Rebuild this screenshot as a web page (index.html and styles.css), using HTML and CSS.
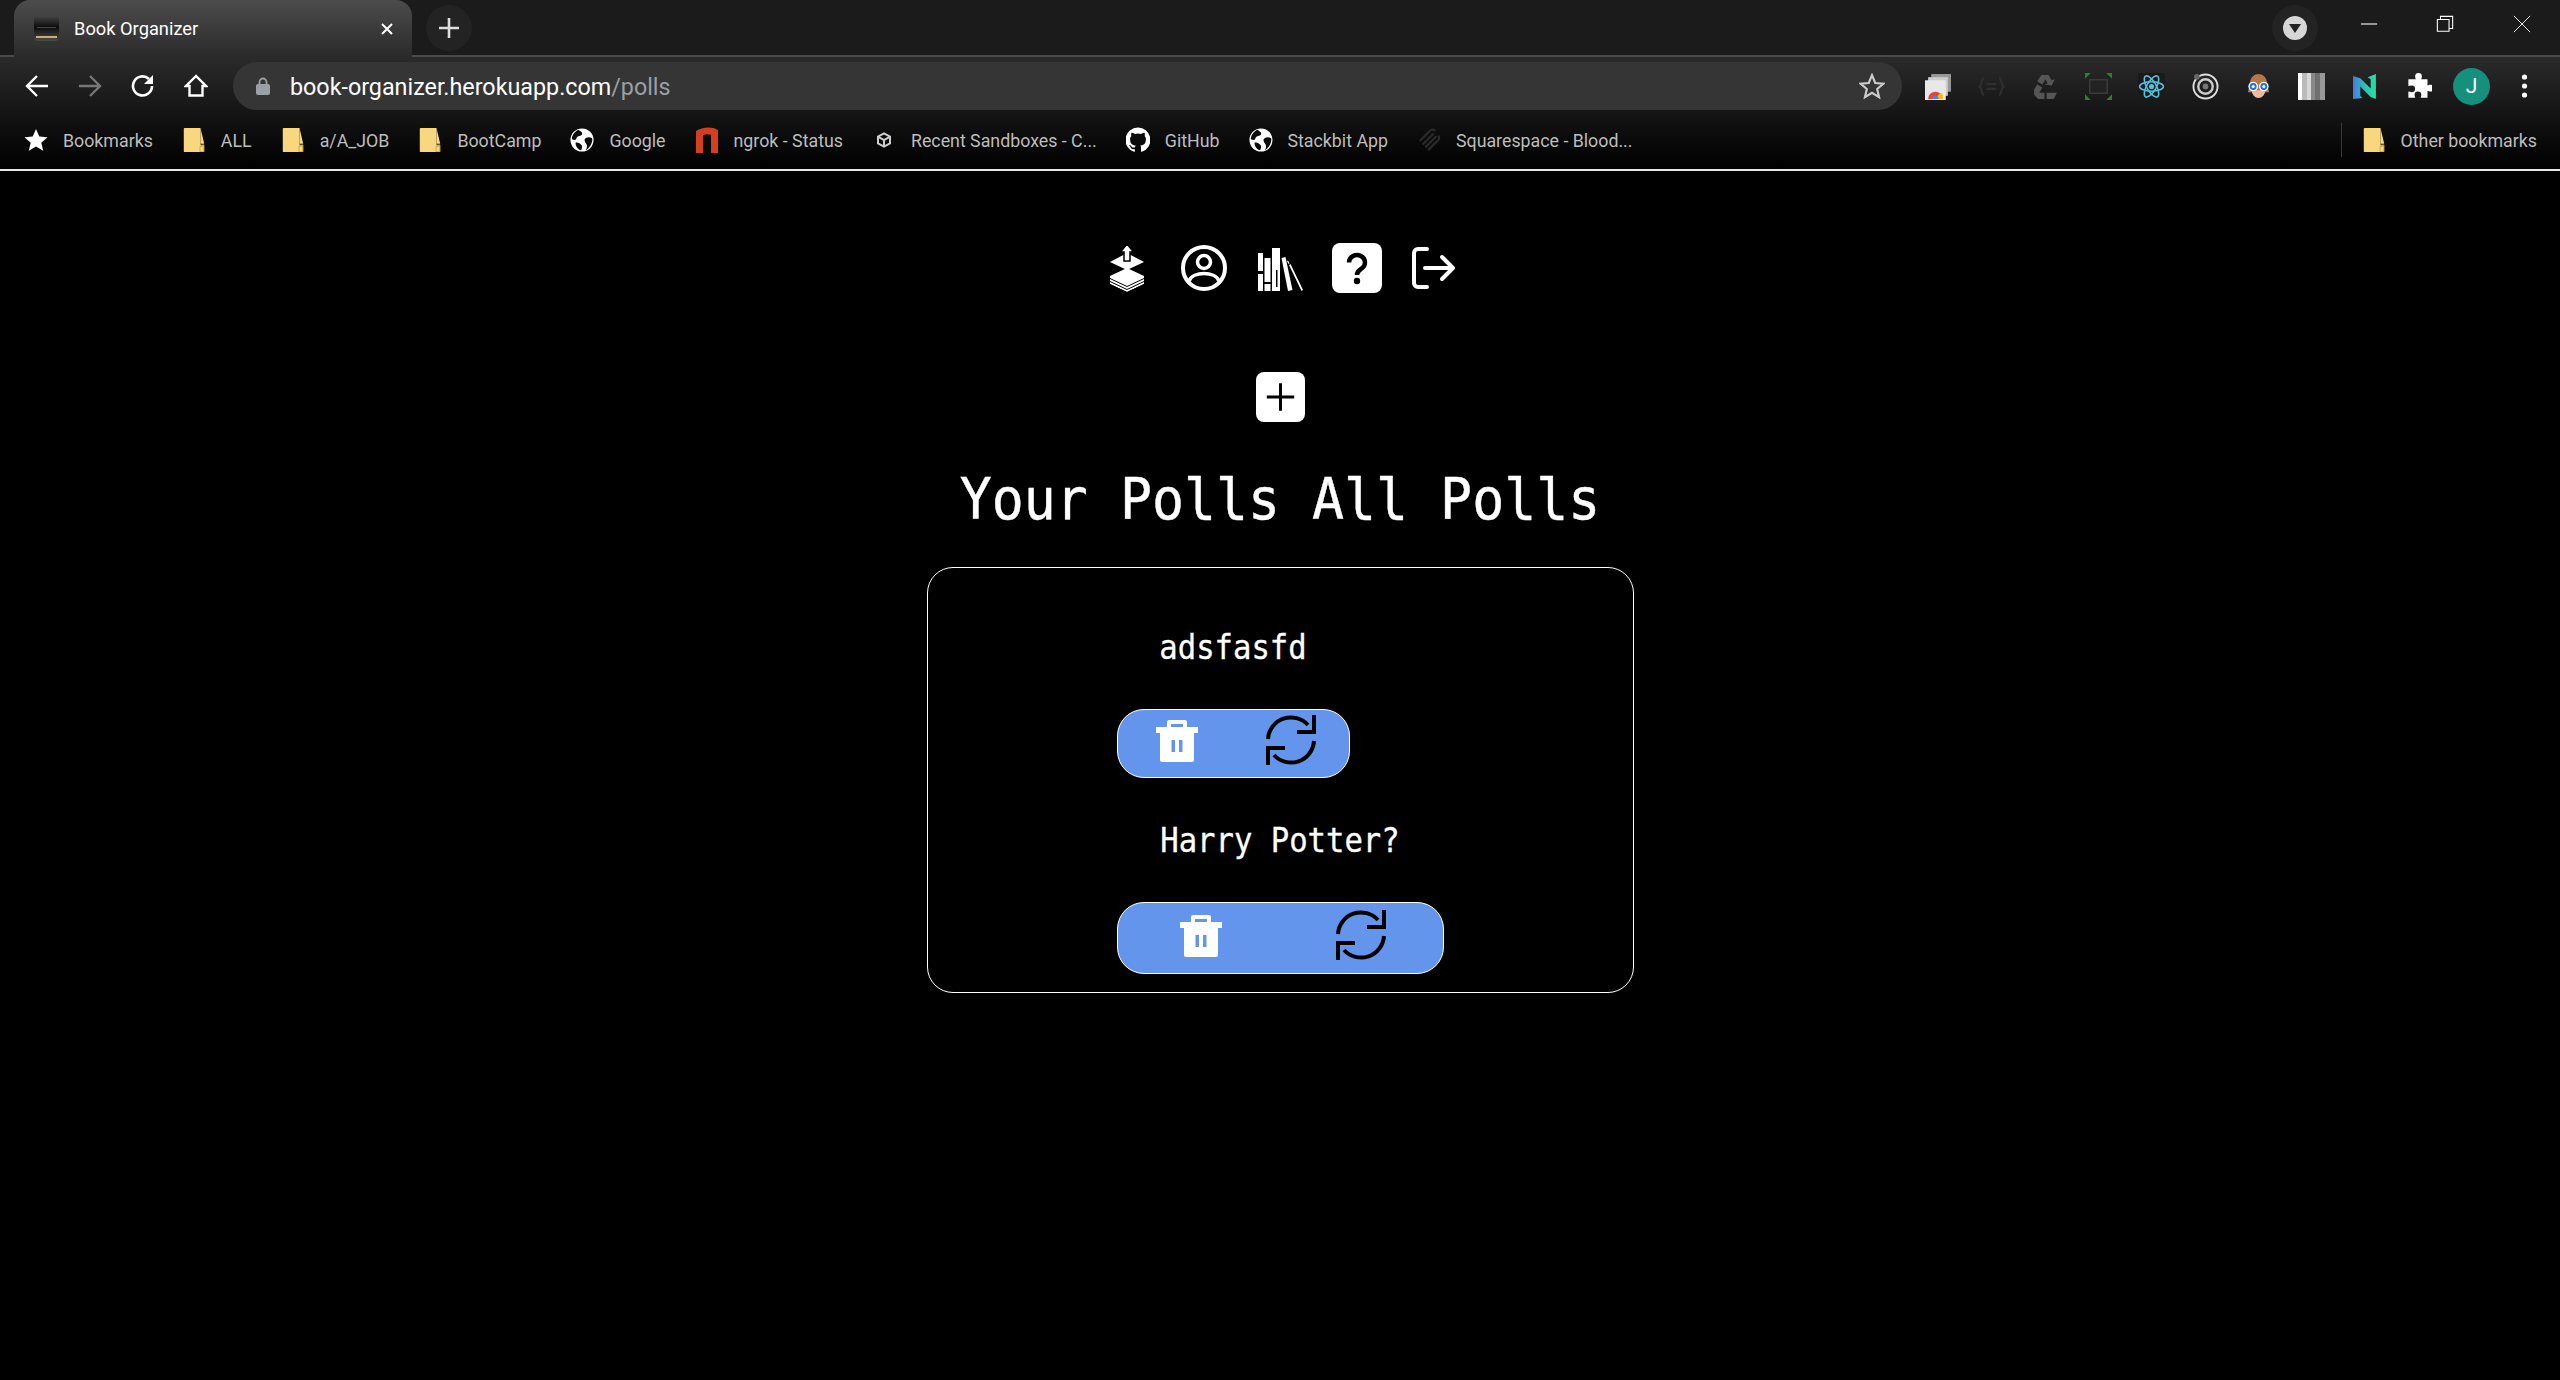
FILE: index.html
```html
<!DOCTYPE html>
<html lang="en">
<head>
  <meta charset="UTF-8" />
  <title>Book Organizer</title>
  <link rel="stylesheet" href="styles.css">
</head>
<body>
  <svg class="defs" width="0" height="0">
    <symbol id="folder" viewBox="0 0 24 28">
      <path d="M2 1h17v18h4v7a1 1 0 0 1-1 1H2a1 1 0 0 1-1-1V2a1 1 0 0 1 1-1z" fill="#f9d77e"/>
      <path d="M19 1v17h4z" fill="#f9d77e"/>
      <path d="M18 27v-6l2-2h3v8z" fill="#c9a84e"/>
      <path d="M20 21h2v5h-3v-4z" fill="#f9d77e"/>
    </symbol>
    <symbol id="globe" viewBox="0 0 26 26">
      <circle cx="13" cy="13" r="12.5" fill="#fff"/>
      <path d="M9 2c3 2 5 3 4 5s-5 1-6 4-4 2-5 1c0-4 3-8 7-10zM24 11c-3-2-7-1-8 1s1 4 2 6 0 5-1 6c4-2 8-8 7-13zM6 16c2-1 4 0 6 2s1 4 0 6c-3 0-6-4-6-8z" fill="#0a0a0a"/>
    </symbol>
    <symbol id="trash" viewBox="0 0 50 50">
      <path d="M17 12V7a2 2 0 0 1 2-2h16a2 2 0 0 1 2 2v5h11v6H6v-6zm4 0h12V9H21z" fill="#fff"/>
      <path d="M10 18h34v27a2 2 0 0 1-2 2H12a2 2 0 0 1-2-2z" fill="#fff"/>
      <path d="M21.500 25h3.500v12h-3.500zM29 25h3.500v12H29z" fill="#6495ed"/>
    </symbol>
    <symbol id="sync" viewBox="0 0 50 50">
      <path d="M2 24A23 23 0 0 1 42 10M48 0v17H31M48 26A23 23 0 0 1 8 40M2 50V33h17" fill="none" stroke="#000" stroke-width="4"/>
    </symbol>
  </svg>

  <header class="browser">
    <div class="tabstrip">
      <div class="tab">
        <svg class="favicon" viewBox="0 0 25 25">
          <defs><linearGradient id="bookg" x1="0" y1="0" x2="0" y2="1"><stop offset="0" stop-color="#444"/><stop offset=".45" stop-color="#0c0c0c"/><stop offset=".7" stop-color="#2a2a2a"/><stop offset="1" stop-color="#4a4a44"/></linearGradient></defs>
          <rect width="25" height="25" rx="4" fill="url(#bookg)"/>
          <path d="M2 20h21v2H2z" fill="#c9ad7a"/>
          <path d="M3 11h19v1H3z" fill="#444"/>
        </svg>
        <span class="tab-title">Book Organizer</span>
        <svg class="tab-close" viewBox="0 0 14 14"><path d="M2 2l10 10M12 2L2 12" stroke="#fff" stroke-width="2"/></svg>
      </div>
      <div class="new-tab">
        <svg viewBox="0 0 22 22"><path d="M11 1v20M1 11h20" stroke="#ddd" stroke-width="2.6"/></svg>
      </div>
      <div class="tabstrip-right">
        <div class="profile-menu"><span class="profile-dot"></span></div>
        <div class="win-btn">
          <svg viewBox="0 0 20 20"><path d="M1 10h18" stroke="#fff" stroke-width="1.2"/></svg>
        </div>
        <div class="win-btn">
          <svg viewBox="0 0 20 20"><path d="M1.5 5h13v13h-13zM5 5V1.500h13.500V15H14.500" fill="none" stroke="#fff" stroke-width="1.2"/></svg>
        </div>
        <div class="win-btn">
          <svg viewBox="0 0 20 20"><path d="M1 1l18 18M19 1L1 19" stroke="#fff" stroke-width="1"/></svg>
        </div>
      </div>
    </div>

    <div class="toolbar">
      <div class="nav-btn"><svg viewBox="0 0 24 24"><path d="M23 12H2M12 2L2 12l10 10" fill="none" stroke="#fff" stroke-width="2.4"/></svg></div>
      <div class="nav-btn"><svg viewBox="0 0 24 24"><path d="M1 12h21M12 2l10 10-10 10" fill="none" stroke="#777" stroke-width="2.4"/></svg></div>
      <div class="nav-btn"><svg viewBox="0 0 24 24"><path d="M21 12a9.500 9.500 0 1 1-3-7" fill="none" stroke="#fff" stroke-width="2.6"/><path d="M22 1v9h-9z" fill="#fff"/></svg></div>
      <div class="nav-btn"><svg viewBox="0 0 24 24"><path d="M12 2L2 12h3.500v9.500h13V12H22z" fill="none" stroke="#fff" stroke-width="2.4"/></svg></div>
      <div class="omnibox">
        <svg class="lock" viewBox="0 0 14 18"><path d="M3.500 8V5a3.500 3.500 0 0 1 7 0v3" fill="none" stroke="#9aa0a6" stroke-width="1.800"/><rect y="7" width="14" height="11" rx="2" fill="#9aa0a6"/></svg>
        <span class="url">book-organizer.herokuapp.com<span class="url-path">/polls</span></span>
        <svg class="omni-star" viewBox="0 0 24 24"><path d="M12 2l3 7.200 7.500.6-5.700 5 1.700 7.500L12 18.300l-6.500 4 1.700-7.500-5.700-5L9 9.200z" fill="none" stroke="#ccc" stroke-width="2"/></svg>
      </div>
      <div class="extensions">
        <div class="ext"><svg viewBox="0 0 26 26">
          <path d="M6 1h19v17H6z" fill="#999"/><path d="M3 4h19v18H3z" fill="#ccc"/><path d="M0 7h20v19H0z" fill="#e8e8e8"/>
          <path d="M3 25a7 7 0 0 1 14 0z" fill="#ea4335"/><path d="M12 25a4 4 0 0 1 5-5v5z" fill="#fbbc05"/><path d="M7 25a3 3 0 0 1 6 0z" fill="#4285f4"/>
        </svg></div>
        <div class="ext"><svg viewBox="0 0 22 16">
          <path d="M5 1C2 1 4 7 1 8c3 1 1 7 4 7M17 1c3 0 1 6 4 7-3 1-1 7-4 7M7 6h8M7 10h8" fill="none" stroke="#2e2e2e" stroke-width="1.800"/>
        </svg></div>
        <div class="ext"><svg viewBox="0 0 26 26">
          <path d="M9 2h7l3 5 3-1-3 6-7-1 3-1-2-4-3 5-5-3zM2 16l3-5 5 3-3 5h5v6H6l-4-4zM14 19h10l-3 6h-7v3z" fill="#555"/>
        </svg></div>
        <div class="ext"><svg viewBox="0 0 28 28">
          <rect x="5" y="7" width="18" height="14" fill="#222" stroke="#3c3c3c" stroke-width="1.500"/>
          <path d="M0 0h6L0 6zM28 0h-6l6 6zM0 28h6l-6-6zM28 28h-6l6-6z" fill="#2f7d32"/>
        </svg></div>
        <div class="ext"><svg viewBox="0 0 26 26">
          <rect width="26" height="26" rx="2" fill="#1a1a1a"/>
          <g fill="none" stroke="#53c1de" stroke-width="1.500"><ellipse cx="13" cy="13" rx="11.500" ry="4.500"/><ellipse cx="13" cy="13" rx="11.500" ry="4.500" transform="rotate(60 13 13)"/><ellipse cx="13" cy="13" rx="11.500" ry="4.500" transform="rotate(120 13 13)"/></g>
          <circle cx="13" cy="13" r="2.500" fill="#53c1de"/>
        </svg></div>
        <div class="ext"><svg viewBox="0 0 28 28">
          <circle cx="14" cy="14" r="12.500" fill="none" stroke="#ddd" stroke-width="2"/>
          <circle cx="14" cy="14" r="7.500" fill="none" stroke="#ccc" stroke-width="2.500"/>
          <circle cx="14" cy="14" r="3" fill="#777"/>
          <circle cx="5" cy="4" r="3" fill="#666"/>
        </svg></div>
        <div class="ext"><svg viewBox="0 0 26 28">
          <path d="M4 12C4 4 9 1 13 1s9 3 9 11l2 8h-4a8 8 0 0 1-14 0H2z" fill="#b5764a"/>
          <path d="M6 18h14a7 8 0 0 1-14 0z" fill="#f0b8a0"/>
          <circle cx="7.500" cy="14" r="5" fill="#fff"/><circle cx="18.500" cy="14" r="5" fill="#fff"/>
          <circle cx="7.500" cy="14" r="3.600" fill="#1a73e8"/><circle cx="18.500" cy="14" r="3.600" fill="#1a73e8"/>
          <circle cx="7.500" cy="14" r="1.600" fill="#fff"/><circle cx="18.500" cy="14" r="1.600" fill="#fff"/>
        </svg></div>
        <div class="ext"><svg viewBox="0 0 27 27">
          <rect width="27" height="27" fill="#6f6f6f"/>
          <path d="M0 0h4v27H0z" fill="#fff"/><path d="M4 0h5v27H4z" fill="#bbb"/><path d="M9 0h4v27H9z" fill="#d8d8d8"/><path d="M13 0h4v27h-4z" fill="#888"/><path d="M22 0h5v27h-5z" fill="#999"/>
        </svg></div>
        <div class="ext"><svg viewBox="0 0 24 26">
          <defs><linearGradient id="nlg" x1="0" y1="0" x2="1" y2="0"><stop offset="0" stop-color="#4a78e8"/><stop offset=".5" stop-color="#2fc0b0"/><stop offset="1" stop-color="#27e0a0"/></linearGradient></defs>
          <path d="M0 3l7 2 10 10V6l-3-2 8-3v24l-5-2L7 13v9l2 2-9 1z" fill="url(#nlg)"/>
        </svg></div>
        <div class="ext"><svg viewBox="0 0 24 24"><path d="M9 3a3 3 0 0 1 6 0c0 1-.5 1.500-.5 2.500H20v5.500c1 0 1.500-.5 2.500-.5a3 3 0 0 1 0 6c-1 0-1.500-.5-2.500-.5V22h-6c0-1 .5-1.500.5-2.500a3 3 0 0 0-6 0c0 1 .5 1.500.5 2.500H3v-5.500c1 0 2 .5 3 .5a3 3 0 0 0 0-6c-1 0-2 .5-3 .5V5.500h6.500C9.500 4.500 9 4 9 3z" fill="#fff"/></svg></div>
        <div class="ext"><span class="avatar">J</span></div>
        <div class="ext"><svg class="menu-dots" viewBox="0 0 6 24"><circle cx="3" cy="3" r="2.600" fill="#fff"/><circle cx="3" cy="12" r="2.600" fill="#fff"/><circle cx="3" cy="21" r="2.600" fill="#fff"/></svg></div>
      </div>
    </div>

    <div class="bookmarks">
      <div class="bm"><svg class="bm-icon" viewBox="0 0 24 24"><path d="M12 1l3.300 7.600 8.200.7-6.200 5.400 1.900 8L12 18.500 4.800 22.700l1.900-8L.5 9.300l8.200-.7z" fill="#fff"/></svg>Bookmarks</div>
      <div class="bm"><svg class="bm-icon"><use href="#folder"/></svg>ALL</div>
      <div class="bm"><svg class="bm-icon"><use href="#folder"/></svg>a/A_JOB</div>
      <div class="bm"><svg class="bm-icon"><use href="#folder"/></svg>BootCamp</div>
      <div class="bm"><svg class="bm-icon"><use href="#globe"/></svg>Google</div>
      <div class="bm"><svg class="bm-icon" viewBox="0 0 24 26"><path d="M1 26V4c6-4 16-5 22-1v23h-7V8c-2-1-5-1-8 0v18z" fill="#d2401f"/></svg>ngrok - Status</div>
      <div class="bm"><svg class="bm-icon" viewBox="-6 -6 36 36"><path d="M12 2l9 5v10l-9 5-9-5V7z" fill="none" stroke="#ccc" stroke-width="3"/><path d="M3 7l9 5 9-5M12 12v10" fill="none" stroke="#ccc" stroke-width="3"/></svg>Recent Sandboxes - C...</div>
      <div class="bm"><svg class="bm-icon" viewBox="1 0 22 25"><path d="M12 .5A12 12 0 0 0 8.200 23.900c.6.1.8-.3.8-.6v-2c-3.300.7-4-1.600-4-1.600-.6-1.400-1.300-1.800-1.300-1.800-1.100-.7.100-.7.100-.7 1.200.1 1.800 1.200 1.800 1.200 1.100 1.800 2.800 1.300 3.500 1 .1-.8.400-1.300.8-1.600-2.700-.3-5.500-1.300-5.500-5.900 0-1.300.5-2.400 1.200-3.200-.1-.3-.5-1.500.1-3.200 0 0 1-.3 3.300 1.200a11.500 11.500 0 0 1 6 0c2.300-1.500 3.300-1.200 3.300-1.200.6 1.700.2 2.900.1 3.200.8.800 1.200 1.900 1.200 3.200 0 4.600-2.800 5.600-5.500 5.900.4.400.8 1.100.8 2.200v3.300c0 .3.200.7.800.6A12 12 0 0 0 12 .5z" fill="#fff"/></svg>GitHub</div>
      <div class="bm"><svg class="bm-icon"><use href="#globe"/></svg>Stackbit App</div>
      <div class="bm"><svg class="bm-icon" viewBox="0 0 26 26"><path d="M3 14L14 3a4 4 0 0 1 6 0M6 18L18 6M9 21L21 9M12 24l11-11a4 4 0 0 0 0-5" fill="none" stroke="#2a2a2a" stroke-width="2.400"/></svg>Squarespace - Blood...</div>
      <div class="bm bm-other"><svg class="bm-icon"><use href="#folder"/></svg>Other bookmarks</div>
    </div>
  </header>

  <main class="app">
    <nav class="app-nav">
      <a class="nav-icon">
        <svg viewBox="0 0 50 50">
          <path d="M8 19l17-9 17 9-17 8z" fill="#fff"/>
          <path d="M25 1l6.500 8H28v9h-6V9h-3.500z" fill="#fff" stroke="#000" stroke-width="1.500"/>
          <path d="M8 33l17-8 17 8v8l-17 8-17-8z" fill="#fff"/>
          <path d="M8 35.500l17 8 17-8M8 38.500l17 8 17-8M8 41.500l17 8 17-8" fill="none" stroke="#000" stroke-width="1"/>
        </svg>
      </a>
      <a class="nav-icon">
        <svg viewBox="0 0 50 50" fill="none" stroke="#fff">
          <circle cx="25" cy="25" r="21" stroke-width="4"/>
          <circle cx="25" cy="19" r="6.500" stroke-width="3.500"/>
          <path d="M10 38c4-10 26-10 30 0" stroke-width="3.500"/>
        </svg>
      </a>
      <a class="nav-icon">
        <svg viewBox="0 0 50 50" fill="#fff">
          <path d="M3 10h5v18H3zM3 31h5v17H3zM9.500 15h6v24h-6zM9.500 41h6v7h-6zM17 5h8v43h-8z"/>
          <path d="M21 27h1.500v17H21z" fill="#000"/>
          <path d="M26.500 15l4-1 7 33-4.500 1z"/>
          <path d="M34 22l1.500-1 12.500 26-1.500 1zM32 18l1-.5 1.500 3-1 .5z"/>
        </svg>
      </a>
      <a class="nav-icon">
        <svg viewBox="0 0 50 50">
          <rect width="50" height="50" rx="8" fill="#fff"/>
          <path d="M17 19.500a8 7.500 0 1 1 12 6.500c-3 1.800-4 3-4 6" fill="none" stroke="#000" stroke-width="4.400"/>
          <circle cx="25" cy="38" r="3.200"/>
        </svg>
      </a>
      <a class="nav-icon">
        <svg viewBox="0 0 50 50" fill="none" stroke="#fff" stroke-width="4" stroke-linecap="round" stroke-linejoin="round">
          <path d="M19 6h-9a4 4 0 0 0-4 4v30a4 4 0 0 0 4 4h9"/>
          <path d="M17 25h28M34 14l11 11-11 11"/>
        </svg>
      </a>
    </nav>

    <a class="add-poll">
      <svg viewBox="0 0 50 50"><path d="M25 11v28M11 25h28" stroke="#000" stroke-width="3"/></svg>
    </a>

    <h1 class="polls-title">Your Polls All Polls</h1>

    <section class="polls-panel">
      <div class="poll-list">
        <div class="poll">
          <p class="poll-name">adsfasfd</p>
          <div class="poll-actions">
            <svg class="poll-icon"><use href="#trash"/></svg>
            <svg class="poll-icon"><use href="#sync"/></svg>
          </div>
        </div>
        <div class="poll poll-wide">
          <p class="poll-name">Harry Potter?</p>
          <div class="poll-actions">
            <svg class="poll-icon"><use href="#trash"/></svg>
            <svg class="poll-icon"><use href="#sync"/></svg>
          </div>
        </div>
      </div>
    </section>
  </main>
</body>
</html>
```

FILE: styles.css
```css
* { box-sizing: border-box; }
body { margin: 0; background: #000; min-height: 1380px; color: #fff; font-family: "Liberation Mono", monospace; }
svg { display: block; }
.defs { position: absolute; }

/* browser chrome */
.browser { height: 171px; background: linear-gradient(#2a2a2a 58px, #0a0a0a 140px, #000 170px); border-bottom: 2px solid #e8e8e8; font-family: Roboto, sans-serif; }
.tabstrip { height: 57px; display: flex; align-items: center; padding-left: 14px; background: #1b1b1b; border-bottom: 2px solid #4a4a4a; }
.tab { width: 398px; height: 57px; align-self: flex-start; display: flex; align-items: center; padding: 0 18px 0 20px; background: linear-gradient(#4c4c4c, #2a2a2a); border-radius: 16px 16px 0 0; color: #fff; font-size: 18.300px; }
.favicon { width: 25px; height: 25px; margin-right: 15px; }
.tab-title { flex: 1; }
.tab-close { width: 14px; height: 14px; }
.new-tab { width: 46px; height: 46px; border-radius: 50%; background: #232323; margin-left: 14px; display: flex; align-items: center; justify-content: center; }
.new-tab svg { width: 22px; height: 22px; }
.tabstrip-right { margin-left: auto; display: flex; align-items: center; }
.profile-menu { width: 46px; height: 46px; border-radius: 50%; background: #232323; display: flex; align-items: center; justify-content: center; margin-right: 13px; }
.profile-dot { width: 24px; height: 24px; border-radius: 50%; background: #d6d6d6; position: relative; }
.profile-dot::after { content: ""; position: absolute; left: 6px; top: 8px; border: 6px solid transparent; border-top: 9px solid #222; border-bottom: 0; }
.win-btn { width: 76.500px; height: 48px; margin-bottom: 7px; display: flex; align-items: center; justify-content: center; }
.win-btn svg { width: 18px; height: 18px; }

.toolbar { height: 58px; display: flex; align-items: center; padding-left: 10px; }
.nav-btn { width: 53px; height: 48px; display: flex; align-items: center; justify-content: center; }
.nav-btn svg { width: 24px; height: 24px; }
.omnibox { width: 1669px; height: 48px; margin-left: 11px; border-radius: 24px; background: #353535; display: flex; align-items: center; padding: 0 17px 0 23px; color: #fff; font-size: 23.300px; }
.lock { width: 14px; height: 18px; margin-right: 20px; }
.url { flex: 1; padding-top: 2px; }
.url-path { color: #9aa0a6; }
.omni-star { width: 26px; height: 26px; }
.extensions { display: flex; margin-left: 10px; }
.ext { width: 53.300px; height: 48px; display: flex; align-items: center; justify-content: center; }
.ext svg { width: 27px; height: 27px; }
.ext .menu-dots { width: 7px; height: 24px; }
.avatar { width: 37px; height: 37px; border-radius: 50%; background: #14907c; color: #fff; display: flex; align-items: center; justify-content: center; font-size: 21px; }

.bookmarks { height: 54px; display: flex; align-items: center; padding: 0 23px 4px 24px; gap: 29px; color: #bdbdbd; font-size: 17.800px; }
.bm { display: flex; align-items: center; gap: 15px; white-space: nowrap; }
.bm-icon { width: 24px; height: 26px; }
.bm-other { margin-left: auto; position: relative; padding-left: 20px; }
.bm-other::before { content: ""; position: absolute; left: -1px; top: -4px; bottom: -4px; width: 1px; background: #3a3a3a; }

/* app */
.app { display: flex; flex-direction: column; align-items: center; }
.app-nav { display: flex; gap: 26.500px; margin-top: 72px; }
.nav-icon { width: 50px; height: 50px; }
.add-poll { width: 49px; height: 50px; margin-top: 79px; background: #fff; border-radius: 8px; }
.add-poll svg { width: 49px; height: 50px; }
.polls-title { margin: 42px 0 0; font-family: "DejaVu Sans Mono", monospace; font-weight: 400; font-size: 53.200px; line-height: 72px; transform: scaleY(1.07); -webkit-text-stroke: .4px #fff; }
.polls-panel { width: 707px; height: 426px; margin-top: 31px; border: 1px solid #fff; border-radius: 26px; display: flex; justify-content: center; }
.poll-list { width: 327px; display: flex; flex-direction: column; align-items: flex-start; padding-top: 60px; }
.poll { width: 233px; display: flex; flex-direction: column; align-items: center; }
.poll-wide { width: 327px; margin-top: 43px; }
.poll-name { margin: 0; font-family: "DejaVu Sans Mono", monospace; font-size: 30.600px; line-height: 40px; transform: scaleY(1.08); -webkit-text-stroke: .3px #fff; }
.poll-actions { width: 100%; height: 69px; margin-top: 41px; padding-top: 5px; display: flex; justify-content: space-around; align-items: flex-start; background: #6495ed; border: 1px solid #fff; border-radius: 27px; }
.poll-wide .poll-actions { height: 72px; padding-top: 7px; }
.poll-icon { width: 50px; height: 50px; }
```
